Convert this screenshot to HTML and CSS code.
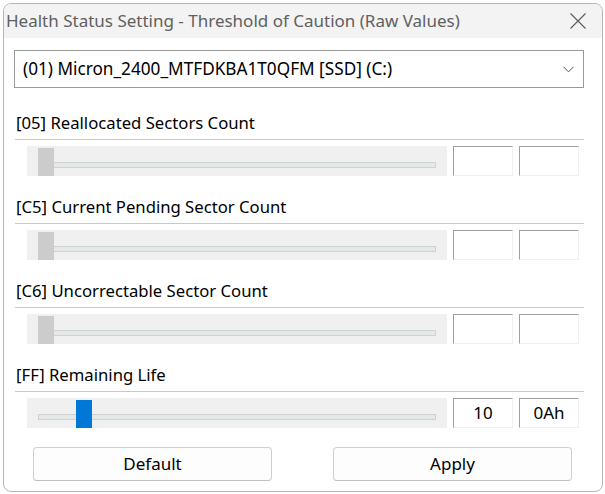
FILE: index.html
```html
<!DOCTYPE html>
<html>
<head>
<meta charset="utf-8">
<link rel="stylesheet" href="styles.css">
</head>
<body>
<div class="window">
  <div class="titlebar">
    <span class="title">Health Status Setting - Threshold of Caution (Raw Values)</span>
    <svg class="close" width="16" height="16" viewBox="0 0 16 16"><path d="M0.5 0.5 L15.5 15.5 M15.5 0.5 L0.5 15.5" stroke="#5a5a5a" stroke-width="1.1" fill="none"/></svg>
  </div>
  <div class="content">
    <div class="combo">
      <span class="combo-text">(01) Micron_2400_MTFDKBA1T0QFM [SSD] (C:)</span>
      <svg class="chev" width="11" height="7" viewBox="0 0 11 7"><path d="M0.5 0.8 L5.5 5.8 L10.5 0.8" stroke="#555" stroke-width="1" fill="none"/></svg>
    </div>

    <div class="section">
      <div class="label">[05] Reallocated Sectors Count</div>
      <div class="sep"></div>
      <div class="row">
        <div class="slider"><div class="track"></div><div class="thumb gray"></div></div>
        <div class="edit"></div>
        <div class="edit"></div>
      </div>
    </div>

    <div class="section">
      <div class="label">[C5] Current Pending Sector Count</div>
      <div class="sep"></div>
      <div class="row">
        <div class="slider"><div class="track"></div><div class="thumb gray"></div></div>
        <div class="edit"></div>
        <div class="edit"></div>
      </div>
    </div>

    <div class="section">
      <div class="label">[C6] Uncorrectable Sector Count</div>
      <div class="sep"></div>
      <div class="row">
        <div class="slider"><div class="track"></div><div class="thumb gray"></div></div>
        <div class="edit"></div>
        <div class="edit"></div>
      </div>
    </div>

    <div class="section">
      <div class="label">[FF] Remaining Life</div>
      <div class="sep"></div>
      <div class="row">
        <div class="slider"><div class="track"></div><div class="thumb blue"></div></div>
        <div class="edit">10</div>
        <div class="edit">0Ah</div>
      </div>
    </div>

    <div class="buttons">
      <div class="btn">Default</div>
      <div class="btn">Apply</div>
    </div>
  </div>
</div>
</body>
</html>
```

FILE: styles.css
```css
* { box-sizing: border-box; }
html, body { margin: 0; padding: 0; background: #ffffff; }
body {
  font-family: "Noto Sans", "Open Sans", sans-serif;
  font-size: 17px;
  color: #000;
  width: 605px;
  height: 494px;
  overflow: hidden;
}
.window {
  margin: 3px 0 0 3px;
  width: 600px;
  height: 489px;
  border: 1px solid #b6b6b6;
  border-radius: 8px;
  overflow: hidden;
  background: #fff;
}
.titlebar {
  height: 34px;
  background: #f3f3f3;
  display: flex;
  align-items: center;
  justify-content: space-between;
  padding: 0 16px 0 2px;
}
.title {
  color: #606060;
  font-size: 17px;
  line-height: 20px;
  margin-top: -1px;
}
.close { display: block; margin-top: -1px; }
.content {
  padding: 12px 10px 0 10px;
}
.combo {
  height: 38px;
  border: 1px solid #9a9a9a;
  display: flex;
  align-items: center;
  justify-content: space-between;
  padding: 0 9px 0 8px;
  margin-right: 8px;
}
.combo-text { font-size: 17.2px; line-height: 20px; }
.chev { display: block; }
.section { margin-top: 24px; }
.section + .section { margin-top: 20px; }
.label {
  height: 22px;
  line-height: 22px;
  padding-left: 2px;
  font-size: 16.7px;
}
.sep {
  height: 1px;
  background: #c9c9c9;
  margin: 5px 8px 6px 1px;
}
.row {
  display: flex;
  gap: 6px;
  padding-left: 13px;
}
.slider {
  position: relative;
  width: 420px;
  height: 30px;
  background: #f0f0f0;
}
.track {
  position: absolute;
  left: 11px;
  right: 11px;
  top: 16px;
  height: 6px;
  background: #e5e8e8;
  border: 1px solid #cfd2d2;
}
.thumb {
  position: absolute;
  top: 2px;
  width: 16px;
  height: 28px;
}
.thumb.gray { left: 11px; background: #cccccc; }
.thumb.blue { left: 49px; background: #0078d7; }
.edit {
  width: 60px;
  height: 30px;
  border-top: 1px solid #a0a0a0;
  border-left: 1px solid #a0a0a0;
  border-right: 1px solid #f0f0f0;
  border-bottom: 1px solid #f0f0f0;
  text-align: center;
  line-height: 28px;
  font-size: 17px;
}
.buttons {
  display: flex;
  gap: 61px;
  margin-top: 19px;
  padding-left: 19px;
}
.btn {
  width: 239px;
  height: 34px;
  border: 1px solid #d0d0d0;
  border-bottom-color: #bdbdbd;
  border-radius: 4px;
  background: #fdfdfd;
  text-align: center;
  line-height: 32px;
  font-size: 17px;
}
```
